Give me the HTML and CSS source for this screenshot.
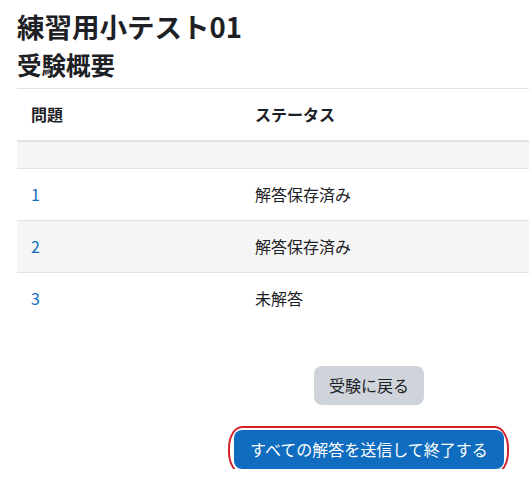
FILE: index.html
```html
<!DOCTYPE html>
<html lang="ja">
<head>
<meta charset="utf-8">
<title>練習用小テスト01</title>
<link rel="stylesheet" href="styles.css">
</head>
<body>
<div class="page">
  <h2 class="title">練習用小テスト01</h2>
  <h3 class="subtitle">受験概要</h3>
  <table class="summary">
    <thead>
      <tr><th class="col-q">問題</th><th>ステータス</th></tr>
    </thead>
    <tbody>
      <tr class="empty"><td></td><td></td></tr>
      <tr><td class="col-q"><a href="#">1</a></td><td>解答保存済み</td></tr>
      <tr class="striped"><td class="col-q"><a href="#">2</a></td><td>解答保存済み</td></tr>
      <tr class="last"><td class="col-q"><a href="#">3</a></td><td>未解答</td></tr>
    </tbody>
  </table>
  <div class="actions">
    <button class="btn btn-secondary" type="button">受験に戻る</button>
    <div class="highlight">
      <button class="btn btn-primary" type="button">すべての解答を送信して終了する</button>
      <span class="ring"></span>
    </div>
  </div>
</div>
</body>
</html>
```

FILE: styles.css
```css
html, body {
  margin: 0;
  padding: 0;
  overflow: hidden;
  background: #ffffff;
}

body {
  font-family: "Noto Sans CJK JP", "Noto Sans", sans-serif;
  color: #1d2125;
  font-size: 16px;
}

.page {
  width: 704px;
  padding-left: 17px;
}

.title {
  font-size: 27.5px;
  font-weight: 700;
  line-height: 32px;
  margin: 10px 0 0 0;
}

.subtitle {
  font-size: 24.5px;
  font-weight: 700;
  line-height: 29px;
  margin: 8px 0 0 0;
}

.summary {
  width: 100%;
  border-collapse: collapse;
  margin-top: 9px;
  border-top: 1px solid #dee2e6;
}

.summary th,
.summary td {
  text-align: left;
  padding: 12px 12px 12px 14px;
  line-height: 27px;
  border-bottom: 1px solid #dee2e6;
}

.summary th {
  font-weight: 700;
  border-bottom: 2px solid #dee2e6;
}

.summary .col-q {
  width: 198px;
}

.summary tr.empty td {
  height: 26px;
  padding: 0;
  background: #f5f5f5;
}

.summary tr.striped td {
  background: #f5f5f5;
}

.summary tr.last td {
  border-bottom: none;
}

.summary a {
  color: #0f6cbf;
  text-decoration: none;
}

.actions {
  display: flex;
  flex-direction: column;
  align-items: center;
  gap: 25px;
  margin-top: 42px;
}

.btn {
  font-family: inherit;
  font-size: 16px;
  line-height: 25px;
  padding: 6px 14px;
  border: 1px solid transparent;
  border-radius: 8px;
  cursor: pointer;
}

.btn-secondary {
  background: #ced4da;
  color: #1d2125;
}

.btn-primary {
  background: #0f6cbf;
  color: #ffffff;
  padding: 6px 15px;
}

.highlight {
  position: relative;
}

.ring {
  position: absolute;
  left: -6px;
  right: -5px;
  top: -4px;
  bottom: -5px;
  border: 2px solid #d2202c;
  border-radius: 14px / 22px;
  pointer-events: none;
}
```
